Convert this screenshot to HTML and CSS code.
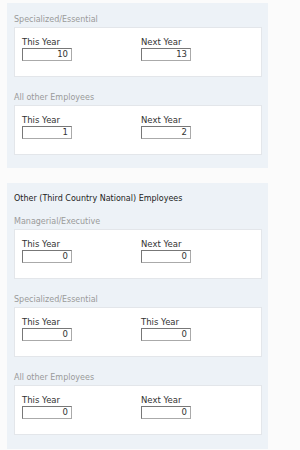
FILE: index.html
```html
<!DOCTYPE html>
<html>
<head>
<meta charset="utf-8">
<link rel="stylesheet" href="styles.css">
</head>
<body>
<div class="page">
  <section class="panel first">
    <div class="group">
      <div class="group-label">Specialized/Essential</div>
      <div class="box">
        <div class="field"><label>This Year</label><div class="input">10</div></div>
        <div class="field"><label>Next Year</label><div class="input">13</div></div>
      </div>
    </div>
    <div class="group">
      <div class="group-label">All other Employees</div>
      <div class="box">
        <div class="field"><label>This Year</label><div class="input">1</div></div>
        <div class="field"><label>Next Year</label><div class="input">2</div></div>
      </div>
    </div>
  </section>
  <section class="panel second">
    <div class="heading">Other (Third Country National) Employees</div>
    <div class="group">
      <div class="group-label">Managerial/Executive</div>
      <div class="box">
        <div class="field"><label>This Year</label><div class="input">0</div></div>
        <div class="field"><label>Next Year</label><div class="input">0</div></div>
      </div>
    </div>
    <div class="group">
      <div class="group-label">Specialized/Essential</div>
      <div class="box">
        <div class="field"><label>This Year</label><div class="input">0</div></div>
        <div class="field"><label>This Year</label><div class="input">0</div></div>
      </div>
    </div>
    <div class="group">
      <div class="group-label">All other Employees</div>
      <div class="box">
        <div class="field"><label>This Year</label><div class="input">0</div></div>
        <div class="field"><label>Next Year</label><div class="input">0</div></div>
      </div>
    </div>
  </section>
</div>
</body>
</html>
```
FILE: styles.css
```css
html, body {
  margin: 0;
  padding: 0;
  background: #fbfbfb;
}
body {
  font-family: "DejaVu Sans", Verdana, sans-serif;
  font-size: 8px;
  color: #333;
}
.page {
  display: flex;
  flex-direction: column;
  padding: 3px 0 0 7px;
}
.panel {
  width: 261px;
  box-sizing: border-box;
  background: #edf2f7;
  padding: 11px 6px 13px 7px;
  display: flex;
  flex-direction: column;
  gap: 15px;
}
.second {
  margin-top: 15px;
  padding-top: 10px;
  padding-bottom: 14px;
  gap: 15px;
}
.heading {
  line-height: 12px;
  color: #222;
  margin-bottom: -4px;
}
.group {
  display: flex;
  flex-direction: column;
  gap: 1px;
}
.group-label {
  line-height: 12px;
  color: #9a9a9a;
}
.box {
  background: #fff;
  border: 1px solid #e3e6ea;
  height: 50px;
  box-sizing: border-box;
  padding: 8px 0 0 7px;
  display: grid;
  grid-template-columns: 119px 119px;
  align-content: start;
}
.field {
  display: flex;
  flex-direction: column;
}
.field label {
  line-height: 12px;
  color: #333;
  font-size: 8.5px;
}
.input {
  width: 50px;
  height: 13px;
  box-sizing: border-box;
  border: 1px solid #aaa;
  border-top-color: #777;
  border-left-color: #777;
  background: #fff;
  text-align: right;
  line-height: 11px;
  padding-right: 3px;
  font-size: 8.5px;
  color: #333;
}
```
